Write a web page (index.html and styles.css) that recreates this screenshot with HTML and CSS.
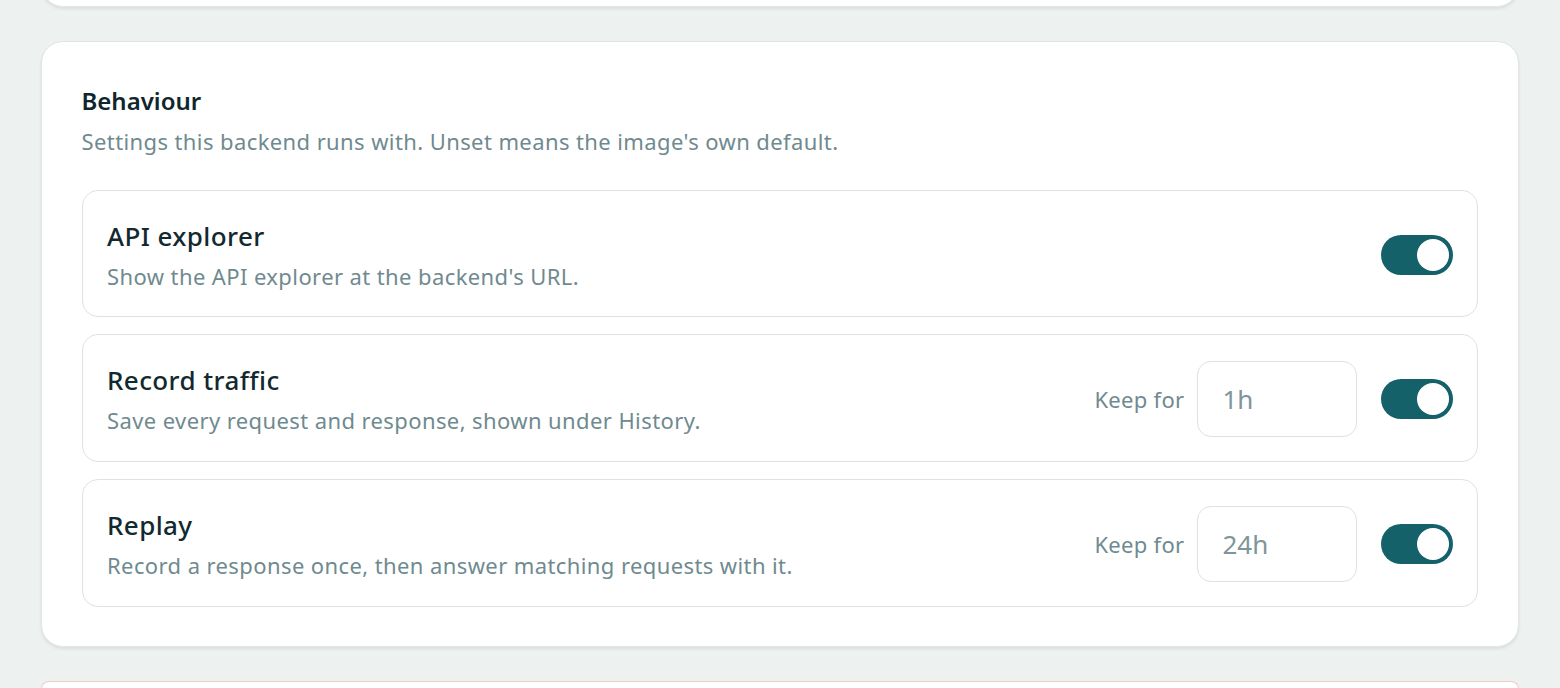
FILE: index.html
```html
<!DOCTYPE html>
<html lang="en">
<head>
<meta charset="utf-8">
<title>Behaviour</title>
<link rel="stylesheet" href="styles.css">
</head>
<body>
<div class="page">
  <div class="card card-prev"></div>
  <section class="card">
    <h2 class="card-title">Behaviour</h2>
    <p class="card-sub">Settings this backend runs with. Unset means the image's own default.</p>
    <div class="rows">
      <div class="row">
        <div class="row-text">
          <div class="row-title">API explorer</div>
          <div class="row-desc">Show the API explorer at the backend's URL.</div>
        </div>
        <div class="row-controls">
          <span class="toggle on"><span class="knob"></span></span>
        </div>
      </div>
      <div class="row">
        <div class="row-text">
          <div class="row-title">Record traffic</div>
          <div class="row-desc">Save every request and response, shown under History.</div>
        </div>
        <div class="row-controls">
          <span class="keep-label">Keep for</span>
          <div class="keep-input">1h</div>
          <span class="toggle on"><span class="knob"></span></span>
        </div>
      </div>
      <div class="row">
        <div class="row-text">
          <div class="row-title">Replay</div>
          <div class="row-desc">Record a response once, then answer matching requests with it.</div>
        </div>
        <div class="row-controls">
          <span class="keep-label">Keep for</span>
          <div class="keep-input">24h</div>
          <span class="toggle on"><span class="knob"></span></span>
        </div>
      </div>
    </div>
  </section>
  <div class="card card-danger"></div>
</div>
</body>
</html>
```
FILE: styles.css
```css
* { box-sizing: border-box; }
html, body { margin: 0; padding: 0; }
body {
  background: #edf1f0;
  font-family: "Noto Sans", "Liberation Sans", sans-serif;
  color: #12292f;
  overflow: hidden;
  height: 688px;
}
.page {
  display: flex;
  flex-direction: column;
  gap: 34px;
  padding: 0 41px;
}
.card {
  background: #ffffff;
  border: 1.5px solid #dfe6e4;
  border-radius: 22px;
  box-shadow: 0 2px 3px rgba(20, 60, 60, 0.09);
  padding: 42px 40.5px 39px 39.5px;
}
.card-prev {
  height: 100px;
  margin-top: -93px;
  padding: 0;
}
.card-danger {
  height: 8px;
  border-color: #f8c9c9;
  border-bottom: 0;
  border-radius: 22px 22px 0 0;
  box-shadow: none;
  padding: 0;
}
.card-title {
  margin: 0;
  font-size: 24px;
  line-height: 34px;
  font-weight: 600;
  letter-spacing: 0;
  color: #10262c;
}
.card-sub {
  margin: 7px 0 0;
  font-size: 22px;
  line-height: 32px;
  letter-spacing: 0.4px;
  color: #6f8a8f;
}
.rows {
  margin-top: 33px;
  display: flex;
  flex-direction: column;
  gap: 17px;
}
.row {
  display: flex;
  align-items: center;
  justify-content: space-between;
  border: 1.5px solid #dce4e2;
  border-radius: 16px;
  padding: 26px 24px 24px 24.5px;
  min-height: 127px;
}
.row-title {
  font-size: 26px;
  line-height: 36px;
  font-weight: 500;
  letter-spacing: 0.4px;
  color: #12292f;
}
.row-desc {
  margin-top: 6px;
  font-size: 22px;
  line-height: 32px;
  letter-spacing: 0.4px;
  color: #6f8a8f;
}
.row-controls {
  display: flex;
  align-items: center;
}
.keep-label {
  font-size: 22px;
  letter-spacing: 0.3px;
  color: #6f8a8f;
  margin-right: 12px;
}
.keep-input {
  width: 160px;
  height: 76px;
  border: 1.5px solid #dce4e2;
  border-radius: 14px;
  padding-left: 25px;
  display: flex;
  align-items: center;
  font-size: 26px;
  color: #7f9599;
  margin-right: 24px;
}
.toggle {
  display: flex;
  align-items: center;
  width: 72px;
  height: 40px;
  border-radius: 20px;
  background: #15616a;
  padding: 4px;
}
.toggle.on { justify-content: flex-end; }
.knob {
  width: 32px;
  height: 32px;
  border-radius: 50%;
  background: #ffffff;
}
```
